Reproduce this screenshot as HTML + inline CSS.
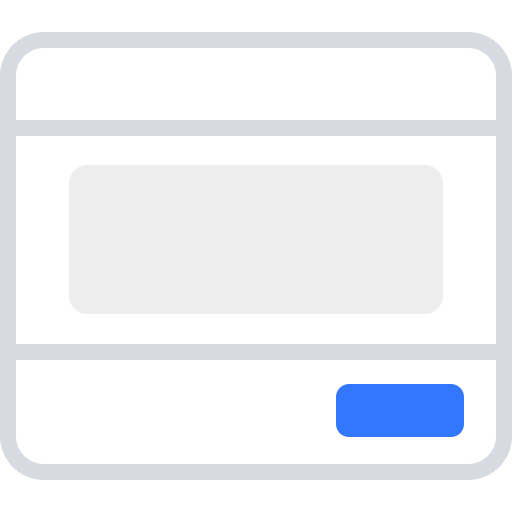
<!DOCTYPE html>
<html><head><style>html,body{margin:0;padding:0;background:#fff;width:512px;height:512px;overflow:hidden}</style></head>
<body>
<svg width="512" height="512" viewBox="0 0 512 512">
<rect x="8" y="40" width="496" height="432" rx="36" fill="none" stroke="#d8dae1" stroke-width="16"/>
<rect x="8" y="120" width="496" height="16" fill="#d8dae1"/>
<rect x="8" y="344" width="496" height="16" fill="#d8dae1"/>
<rect x="69" y="165" width="374" height="149" rx="18" fill="#eeeeee"/>
<rect x="336" y="384" width="128" height="53" rx="13" fill="#3377ff"/>
</svg>
</body></html>
